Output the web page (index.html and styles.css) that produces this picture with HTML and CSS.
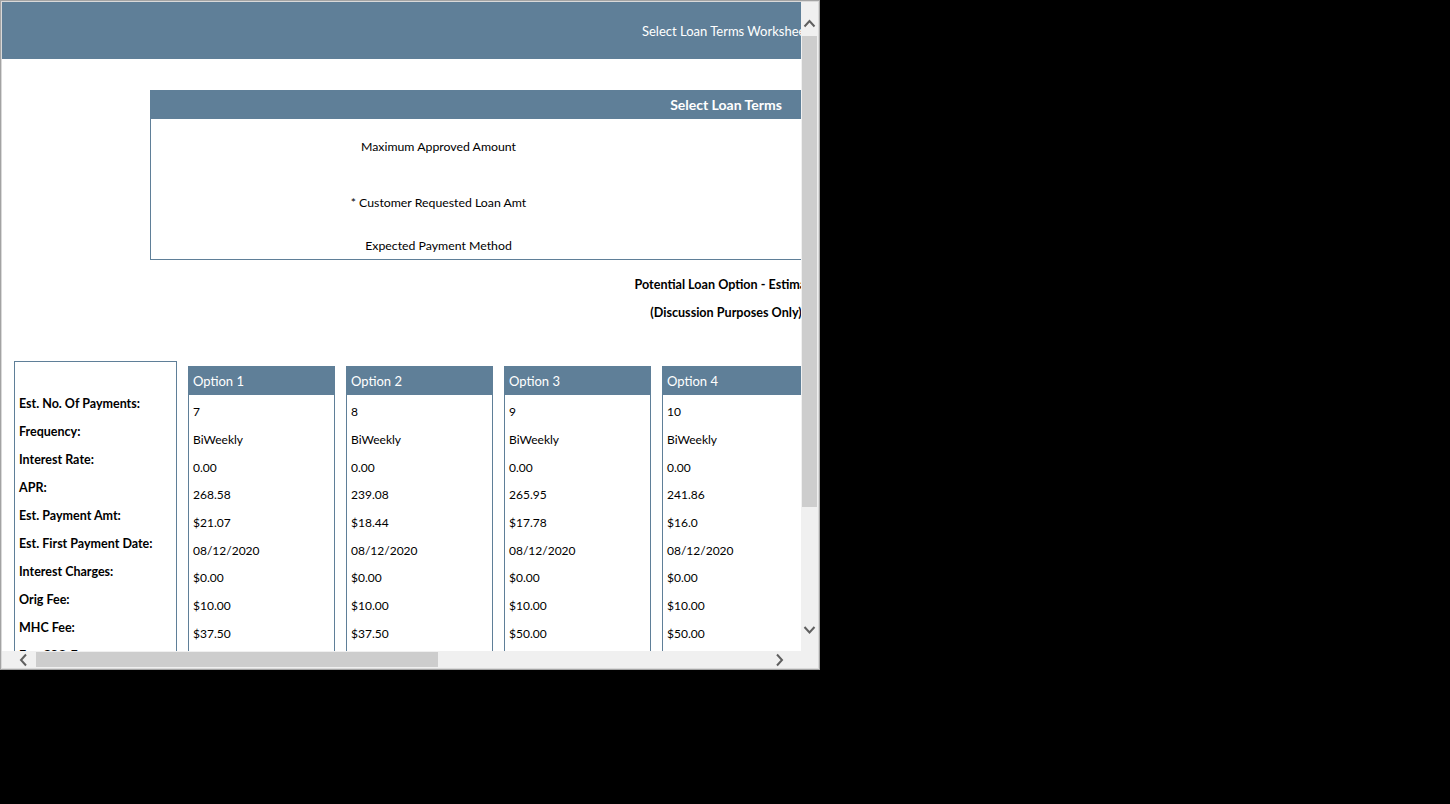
FILE: index.html
```html
<!DOCTYPE html>
<html>
<head>
<meta charset="utf-8">
<title>Select Loan Terms Worksheet</title>
<link rel="stylesheet" href="styles.css">
</head>
<body>
<div class="window">
  <div class="viewport">
    <div class="content">
      <div class="topbar">Select Loan Terms Worksheet</div>

      <div class="panel">
        <div class="panel-head">Select Loan Terms</div>
        <div class="panel-body">
          <div class="pl">Maximum Approved Amount</div><div class="pv"></div>
          <div class="pl">* Customer Requested Loan Amt</div><div class="pv"></div>
          <div class="pl">Expected Payment Method</div><div class="pv"></div>
        </div>
      </div>

      <div class="estimate">
        <div>Potential Loan Option - Estimate</div>
        <div>(Discussion Purposes Only)</div>
      </div>

      <div class="options">
        <div class="labels">
          <div class="lrow">Est. No. Of Payments:</div>
          <div class="lrow">Frequency:</div>
          <div class="lrow">Interest Rate:</div>
          <div class="lrow">APR:</div>
          <div class="lrow">Est. Payment Amt:</div>
          <div class="lrow">Est. First Payment Date:</div>
          <div class="lrow">Interest Charges:</div>
          <div class="lrow">Orig Fee:</div>
          <div class="lrow">MHC Fee:</div>
          <div class="lrow">Est. CSO Fee:</div>
        </div>

        <div class="option">
          <div class="option-head">Option 1</div>
          <div class="option-body">
            <div class="vrow">7</div>
            <div class="vrow">BiWeekly</div>
            <div class="vrow">0.00</div>
            <div class="vrow">268.58</div>
            <div class="vrow">$21.07</div>
            <div class="vrow">08/12/2020</div>
            <div class="vrow">$0.00</div>
            <div class="vrow">$10.00</div>
            <div class="vrow">$37.50</div>
            <div class="vrow">$0.00</div>
          </div>
        </div>

        <div class="option">
          <div class="option-head">Option 2</div>
          <div class="option-body">
            <div class="vrow">8</div>
            <div class="vrow">BiWeekly</div>
            <div class="vrow">0.00</div>
            <div class="vrow">239.08</div>
            <div class="vrow">$18.44</div>
            <div class="vrow">08/12/2020</div>
            <div class="vrow">$0.00</div>
            <div class="vrow">$10.00</div>
            <div class="vrow">$37.50</div>
            <div class="vrow">$0.00</div>
          </div>
        </div>

        <div class="option">
          <div class="option-head">Option 3</div>
          <div class="option-body">
            <div class="vrow">9</div>
            <div class="vrow">BiWeekly</div>
            <div class="vrow">0.00</div>
            <div class="vrow">265.95</div>
            <div class="vrow">$17.78</div>
            <div class="vrow">08/12/2020</div>
            <div class="vrow">$0.00</div>
            <div class="vrow">$10.00</div>
            <div class="vrow">$50.00</div>
            <div class="vrow">$0.00</div>
          </div>
        </div>

        <div class="option">
          <div class="option-head">Option 4</div>
          <div class="option-body">
            <div class="vrow">10</div>
            <div class="vrow">BiWeekly</div>
            <div class="vrow">0.00</div>
            <div class="vrow">241.86</div>
            <div class="vrow">$16.0</div>
            <div class="vrow">08/12/2020</div>
            <div class="vrow">$0.00</div>
            <div class="vrow">$10.00</div>
            <div class="vrow">$50.00</div>
            <div class="vrow">$0.00</div>
          </div>
        </div>

        <div class="option">
          <div class="option-head">Option 5</div>
          <div class="option-body">
            <div class="vrow">11</div>
          </div>
        </div>
      </div>
    </div>
  </div>

  <div class="vscroll">
    <div class="btn-v">
      <svg width="17" height="34" viewBox="0 0 17 34"><polyline points="3.5,24.5 8.5,19 13.5,24.5" fill="none" stroke="#606060" stroke-width="2"/></svg>
    </div>
    <div class="vthumb"></div>
    <div class="vrest">
      <svg width="17" height="34" viewBox="0 0 17 34"><polyline points="3.5,10 8.5,15.5 13.5,10" fill="none" stroke="#606060" stroke-width="2"/></svg>
    </div>
  </div>

  <div class="hscroll">
    <div class="btn-h">
      <svg width="34" height="17" viewBox="0 0 34 17"><polyline points="24,3.5 19,9 24,14.5" fill="none" stroke="#606060" stroke-width="2"/></svg>
    </div>
    <div class="hthumb"></div>
    <div class="hrest">
      <svg width="34" height="17" viewBox="0 0 34 17"><polyline points="10,3.5 15,9 10,14.5" fill="none" stroke="#606060" stroke-width="2"/></svg>
    </div>
  </div>

  <div class="corner"></div>
</div>
</body>
</html>
```

FILE: styles.css
```css
html, body {
  margin: 0;
  padding: 0;
  background: #000;
}

body {
  font-family: Lato, "Open Sans", "Liberation Sans", sans-serif;
  font-size: 13px;
  color: #000;
}

.window {
  width: 820px;
  height: 670px;
  box-sizing: border-box;
  border: 1px solid #a3a3a3;
  padding: 1px;
  background: #d9d9d9;
  display: grid;
  grid-template-columns: 799px 17px;
  grid-template-rows: 649px 17px;
}

.viewport {
  overflow: hidden;
  background: #fff;
}

.content {
  width: 1448px;
}

.topbar {
  height: 57px;
  background: #5f7f98;
  color: #fff;
  display: flex;
  align-items: center;
  justify-content: center;
  padding-top: 1px;
  box-sizing: border-box;
}

.panel {
  width: 1152px;
  margin: 31px auto 0;
}

.panel-head {
  height: 29px;
  background: #5f7f98;
  color: #fff;
  font-weight: bold;
  font-size: 14px;
  display: flex;
  align-items: center;
  justify-content: center;
}

.panel-body {
  border: 1px solid #5f7f98;
  border-top: 0;
  display: grid;
  grid-template-columns: 1fr 1fr;
  grid-template-rows: 54px 58px 28px;
  font-size: 12.3px;
}

.pl {
  display: flex;
  align-items: center;
  justify-content: center;
}

.estimate {
  margin-top: 11px;
  text-align: center;
  font-weight: bold;
  font-size: 12.6px;
  line-height: 28px;
}

.options {
  margin-top: 34px;
  padding-left: 12px;
  display: flex;
  align-items: flex-start;
  gap: 11px;
}

.labels {
  flex: none;
  width: 163px;
  height: 320px;
  box-sizing: border-box;
  border: 1px solid #5f7f98;
  padding: 28px 0 0 4px;
  font-weight: bold;
  font-size: 12.5px;
}

.lrow {
  height: 28px;
  line-height: 28px;
  white-space: nowrap;
}

.option {
  flex: none;
  width: 147px;
  margin-top: 5px;
}

.option-head {
  height: 29px;
  line-height: 31px;
  overflow: hidden;
  background: #5f7f98;
  color: #fff;
  padding-left: 5px;
  font-size: 13px;
}

.option-body {
  height: 300px;
  box-sizing: border-box;
  border: 1px solid #5f7f98;
  border-top: 0;
  padding: 2px 0 0 4px;
  font-size: 12px;
}

.vrow {
  height: 28px;
  display: flex;
  align-items: center;
}

.vrow:nth-child(4) { height: 26px; }
.vrow:nth-child(5) { height: 30px; }
.vrow:nth-child(6) { height: 26px; }

.vscroll {
  background: #f0f0f0;
  display: flex;
  flex-direction: column;
}

.btn-v {
  height: 34px;
  flex: none;
}

.btn-v svg, .vrest svg, .btn-h svg, .hrest svg {
  display: block;
}

.vthumb {
  height: 471px;
  margin: 0 1px;
  background: #cdcdcd;
  flex: none;
}

.vrest {
  flex: 1;
  display: flex;
  flex-direction: column;
  justify-content: flex-end;
}

.hscroll {
  background: #f0f0f0;
  display: flex;
}

.btn-h {
  width: 34px;
  flex: none;
}

.hthumb {
  width: 402px;
  margin: 1px 0;
  background: #cdcdcd;
  flex: none;
}

.hrest {
  flex: 1;
  display: flex;
  justify-content: flex-end;
}

.corner {
  background: #f0f0f0;
}
```
